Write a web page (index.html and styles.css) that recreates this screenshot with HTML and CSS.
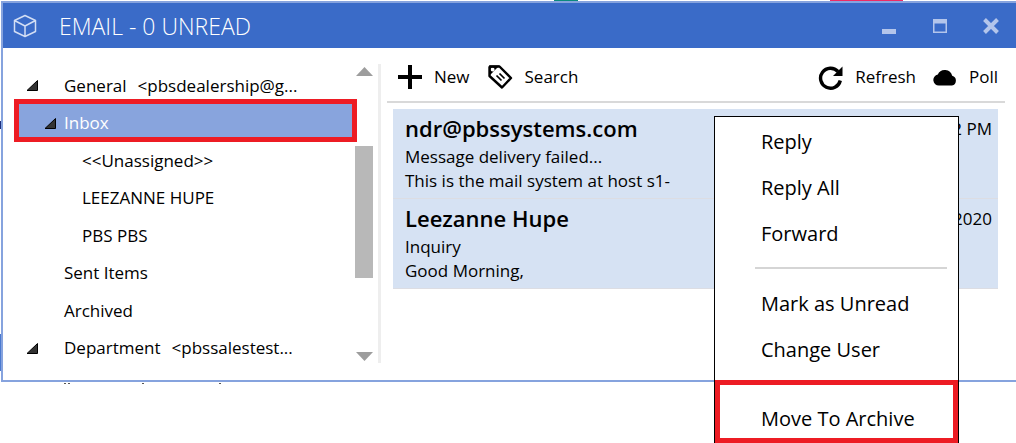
FILE: index.html
```
<!DOCTYPE html>
<html lang="en">
<head>
<meta charset="utf-8">
<title>Email</title>
<link rel="stylesheet" href="styles.css">
</head>
<body>
<main class="window">
  <header class="titlebar">
    <svg class="logo" viewBox="0 0 24 24" width="24" height="24" fill="none" stroke="currentColor" stroke-width="1.500" stroke-linejoin="round"><path d="M12 1.500 22.500 6.500v11L12 22.500 1.500 17.500v-11zM1.500 6.500 12 12 22.500 6.500M12 12v10.500"/></svg>
    <h1 class="title">EMAIL - 0 UNREAD</h1>
    <button class="winbtn" aria-label="Minimize"><svg width="16" height="16"><path d="M1 11h14v5H1z" fill="currentColor"/></svg></button>
    <button class="winbtn" aria-label="Maximize"><svg width="16" height="16"><path d="M1 1h14v14H1zM2.500 5.500v8h11v-8z" fill="currentColor" fill-rule="evenodd"/></svg></button>
    <button class="winbtn" aria-label="Close"><svg width="16" height="16"><path d="M1.500 1.500l13 13M14.500 1.500l-13 13" stroke="currentColor" stroke-width="4"/></svg></button>
  </header>
  <div class="body">
    <nav class="sidebar">
      <ul class="tree">
        <li class="row"><svg class="arrow" width="12" height="11"><path d="M1 10.500 11.500.500v10z"/></svg><span>General</span><span class="address">&lt;pbsdealership@g...</span></li>
        <li class="row selected"><svg class="arrow" width="12" height="11"><path d="M1 10.500 11.500.500v10z"/></svg><span>Inbox</span></li>
        <li class="row child">&lt;&lt;Unassigned&gt;&gt;</li>
        <li class="row child">LEEZANNE HUPE</li>
        <li class="row child">PBS PBS</li>
        <li class="row folder">Sent Items</li>
        <li class="row folder">Archived</li>
        <li class="row"><svg class="arrow" width="12" height="11"><path d="M1 10.500 11.500.500v10z"/></svg><span>Department</span><span class="address">&lt;pbssalestest...</span></li>
      </ul>
      <div class="scrollbar">
        <button class="scrollbtn" aria-label="Scroll up"><svg width="18" height="9"><path d="M1 9 9.500 0 18 9z" fill="currentColor"/></svg></button>
        <div class="track"><div class="thumb"></div></div>
        <button class="scrollbtn" aria-label="Scroll down"><svg width="18" height="9"><path d="M1 0 9.500 9 18 0z" fill="currentColor"/></svg></button>
      </div>
    </nav>
    <section class="content">
      <div class="toolbar">
        <button class="tool"><svg width="24" height="24"><path d="M12 0v24M0 12h24" stroke="#000" stroke-width="4"/></svg>New</button>
        <button class="tool"><svg width="26" height="26" viewBox="0 0 26 26"><path d="M3 2.500h9.500L24 14 15 23.500 2.500 12V3z" fill="none" stroke="#000" stroke-width="2.400" stroke-linejoin="round"/><path fill-rule="evenodd" d="M2 1.500h10.500L2 12zM5.500 3.500a2 2 0 1 0 .1 0z"/><path d="M9.500 11.500l5 5M12.500 9.500l5 5" stroke="#000" stroke-width="1.700"/></svg>Search</button>
        <span class="spacer"></span>
        <button class="tool"><svg width="25" height="25" viewBox="0 0 25 25"><path d="M20 6.500A10 10 0 1 0 22.300 15.500" fill="none" stroke="#000" stroke-width="3.400"/><path d="M24.500 1.500V11H15z"/></svg>Refresh</button>
        <button class="tool"><svg width="24" height="17" viewBox="0 0 24 17"><path d="M6 16.500a5.500 5.500 0 0 1-1.200-10.900 7.600 7.600 0 0 1 14.400 1.200A5 5 0 0 1 19 16.500z"/></svg>Poll</button>
      </div>
      <div class="mails">
        <article class="mail">
          <div class="mailtext"><h2 class="from">ndr@pbssystems.com</h2><p>Message delivery failed...</p><p>This is the mail system at host s1-</p></div>
          <time class="time">2 PM</time>
        </article>
        <article class="mail">
          <div class="mailtext"><h2 class="from">Leezanne Hupe</h2><p>Inquiry</p><p>Good Morning,</p></div>
          <time class="time">2020</time>
        </article>
      </div>
    </section>
  </div>
</main>
<div class="menu" role="menu">
  <button class="item" role="menuitem">Reply</button>
  <button class="item" role="menuitem">Reply All</button>
  <button class="item" role="menuitem">Forward</button>
  <hr class="separator">
  <button class="item" role="menuitem">Mark as Unread</button>
  <button class="item" role="menuitem">Change User</button>
  <button class="item marked" role="menuitem">Move To Archive</button>
</div>
</body>
</html>
```
FILE: styles.css
```
* { box-sizing: border-box; }
body {
  margin: 0;
  padding: 1px 0 0 1px;
  position: relative;
  overflow: hidden;
  min-height: 100vh;
  background:
    linear-gradient(#0b8a7d, #0b8a7d) 554px 0 / 24px 1px no-repeat,
    linear-gradient(#ee2a64, #ee2a64) 830px 0 / 73px 1px no-repeat,
    linear-gradient(#4a7ad0, #4a7ad0) 0 334px / 1px 37px no-repeat,
    linear-gradient(#1c2f7c, #1c2f7c) 0 121px / 1px 8px no-repeat,
    linear-gradient(#555, #555) 64px 383px / 2px 1px no-repeat,
    linear-gradient(#555, #555) 68px 383px / 2px 1px no-repeat,
    linear-gradient(#555, #555) 142px 383px / 2px 1px no-repeat,
    linear-gradient(#555, #555) 219px 383px / 2px 1px no-repeat,
    #fff;
  color: #000;
  font: 17px/24px "Open Sans", "Noto Sans", sans-serif;
}
h1, h2, p, ul { margin: 0; padding: 0; font-weight: 400; }
button { margin: 0; padding: 0; border: 0; background: none; color: inherit; font: inherit; }
svg { display: block; flex: none; }

.window { border: solid #86a3de; border-width: 2px 0 2px 2px; background: #fff; }
.titlebar {
  display: flex;
  align-items: center;
  height: 45px;
  padding: 0 17px 0 10px;
  background: #3a6bc8;
  color: #fff;
}
.logo { color: #d3def4; }
.title { flex: 1; margin-left: 22px; font-size: 23px; line-height: 32px; font-weight: 300; }
.winbtn { width: 16px; margin-left: 35px; color: #b3c5eb; }

.body { display: flex; height: 332px; }
.sidebar { display: flex; width: 378px; padding: 16px 8px 17px 11px; position: relative; }
.sidebar::after {
  content: "";
  position: absolute;
  inset: 16px 0 17px auto;
  width: 3px;
  background: #eee;
}
.tree { flex: 1; display: grid; grid-auto-rows: 1fr; height: 300px; margin-top: 3px; list-style: none; }
.row { display: flex; align-items: center; position: relative; z-index: 0; padding-left: 12px; white-space: nowrap; }
.arrow { margin-right: 26px; fill: #333; stroke: #000; }
.address { margin-left: 11px; }
.selected { padding-left: 30px; color: #fff; }
.selected .arrow { margin-right: 8px; }
.selected::before {
  content: "";
  position: absolute;
  inset: -6px -2px 0 0;
  z-index: -1;
  border: 5px solid #ed1c24;
  background: #88a4dd;
}
.child { padding-left: 68px; }
.folder { padding-left: 50px; }
.scrollbar { display: flex; flex-direction: column; width: 18px; padding: 3px 0 2px; color: #9d9d9d; }
.track { flex: 1; padding-top: 70px; }
.thumb { height: 132px; background: #b8b8b8; }

.content { flex: 1; padding: 0 11px 0 6px; }
.toolbar { display: flex; align-items: center; gap: 17px; height: 55px; padding: 5px 7px 0 11px; border-bottom: 2px solid #d9d9d9; }
.tool { display: flex; align-items: center; gap: 12px; }
.spacer { flex: 1; }
.mails { padding: 6px 7px 0 6px; }
.mail { display: flex; justify-content: space-between; height: 90px; padding: 6px 6px 0 12px; border-bottom: 1px solid #dcdde3; background: #d6e2f3; }
.from { margin-bottom: 4px; font-size: 22px; line-height: 26px; font-weight: 600; }
.time { padding-top: 2px; }

.menu {
  position: absolute;
  top: 116px;
  right: 57px;
  width: 245px;
  padding-top: 2px;
  border: 1px solid #000;
  border-bottom: 0;
  background: #fff;
  font-size: 20px;
}
.item { display: block; width: 100%; height: 46px; padding-left: 46px; text-align: left; }
.separator { height: 2px; margin: 10px 11px 12px 40px; border: 0; background: #d5d5d5; }
.marked { height: 63px; margin-top: 7px; padding: 14px 0 0 41px; border: 5px solid #ed1c24; }
```
